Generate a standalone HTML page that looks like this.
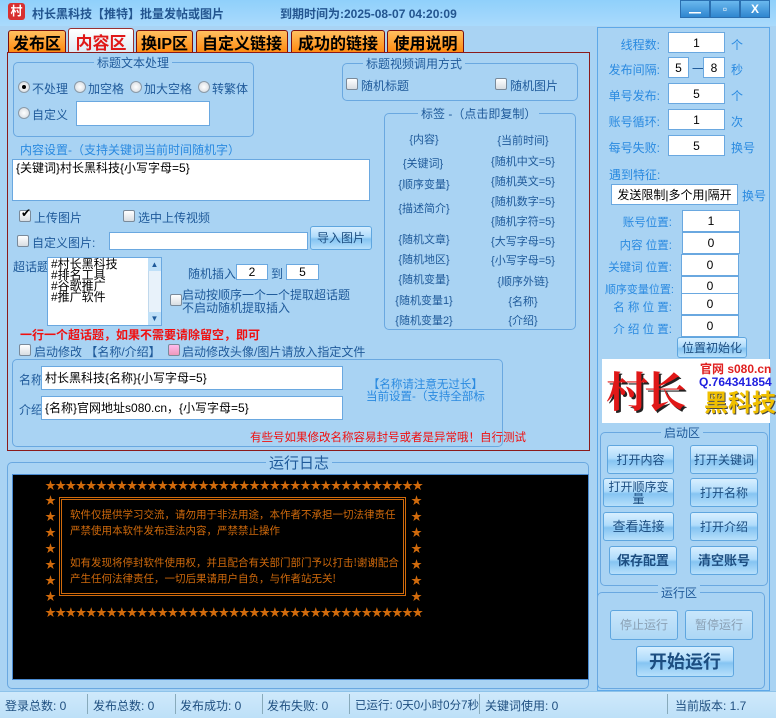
<!DOCTYPE html>
<html><head><meta charset="utf-8">
<style>
*{box-sizing:border-box;margin:0;padding:0}
body{width:776px;height:718px;overflow:hidden;background:#a9d3f3;font-family:"Liberation Sans","Noto Sans CJK SC",sans-serif;font-size:12px;color:#1f5a9a;position:relative}
.a{position:absolute;white-space:nowrap}
.inp{position:absolute;background:#fff;border:1px solid #6aa8e0;color:#000;font-size:12px;line-height:1;display:flex;align-items:center;justify-content:center}
.grp{position:absolute;border:1px solid #6aa8e0;border-radius:5px}
.gl{position:absolute;background:#a9d3f3;padding:0 3px;top:-9px;font-size:12px;color:#1f5a9a;white-space:nowrap}
.cb{position:absolute;width:12px;height:12px;border:1px solid #7a8a9a;border-radius:2px;background:linear-gradient(#fff,#d8dde2)}
.rd{position:absolute;width:12px;height:12px;border:1px solid #8a9aa8;border-radius:50%;background:radial-gradient(#fff,#d0d6dc)}
.tab{position:absolute;top:30px;height:22px;border:1px solid #7a1010;border-bottom:none;border-radius:3px 3px 0 0;background:linear-gradient(#ffc060,#ff8a10);color:#000;font-weight:bold;font-size:16px;display:flex;align-items:center;justify-content:center}
.btn{position:absolute;border:1px solid #5fa6df;border-radius:3px;background:linear-gradient(#d8efff 0%,#b0dcfb 45%,#85c4f2 55%,#b7e0fb 100%);color:#1c4d80;font-size:12px;display:flex;align-items:center;justify-content:center;text-align:center;line-height:12px}
.tg{position:absolute;font-size:11px;color:#1f5a9a;white-space:nowrap;transform:translateX(-50%)}
.rl{position:absolute;color:#2a8ae0;font-size:12px;text-align:right;white-space:nowrap}
.lg{position:absolute;color:#d06a0c;font-size:10.5px;white-space:nowrap;font-family:"Noto Sans CJK SC",sans-serif}
.sb{position:absolute;top:697px;font-size:12px;color:#1f4f80}
.sep{position:absolute;top:694px;width:1px;height:20px;background:#8ab}
</style></head><body>
<div class="a" style="left:0;top:0;width:776px;height:26px;background:linear-gradient(#8fd0fb,#a9dafc)"></div>
<div class="a" style="left:8px;top:3px;width:17px;height:17px;background:#d83030;border-radius:3px;color:#fff;font-size:12px;font-weight:bold;text-align:center;line-height:17px">村</div>
<div class="a" style="left:32px;top:5px;font-size:12px;font-weight:bold;color:#23558f">村长黑科技【推特】批量发帖或图片</div>
<div class="a" style="left:280px;top:5px;font-size:12px;font-weight:bold;color:#23558f">到期时间为:2025-08-07 04:20:09</div>
<div class="a" style="left:680px;top:0;width:30px;height:18px;background:linear-gradient(#6ab8ee,#2f86cf);border:1px solid #2a6fb0;color:#fff;text-align:center;font-weight:bold;line-height:14px">▁</div>
<div class="a" style="left:710px;top:0;width:30px;height:18px;background:linear-gradient(#6ab8ee,#2f86cf);border:1px solid #2a6fb0;color:#fff;text-align:center;font-weight:bold;line-height:16px">▫</div>
<div class="a" style="left:740px;top:0;width:30px;height:18px;background:linear-gradient(#6ab8ee,#2f86cf);border:1px solid #2a6fb0;color:#fff;text-align:center;font-weight:bold;line-height:16px">X</div>

<div class="tab" style="left:8px;width:58px">发布区</div>
<div class="tab" style="left:68px;width:66px;top:28px;height:25px;background:linear-gradient(#fff,#dde9f2);color:#e01818;font-size:17px;border-color:#9a3030">内容区</div>
<div class="tab" style="left:136px;width:57px">换IP区</div>
<div class="tab" style="left:196px;width:92px">自定义链接</div>
<div class="tab" style="left:291px;width:94px">成功的链接</div>
<div class="tab" style="left:387px;width:77px">使用说明</div>

<div class="a" style="left:7px;top:52px;width:583px;height:399px;border:1px solid #8b1a1a"></div>

<div class="grp" style="left:13px;top:62px;width:241px;height:75px"><span class="gl" style="left:80px">标题文本处理</span></div>
<div class="rd" style="left:18px;top:81px"></div><div class="a" style="left:22px;top:85px;width:4px;height:4px;background:#000;border-radius:50%"></div>
<div class="a" style="left:32px;top:80px">不处理</div>
<div class="rd" style="left:74px;top:81px"></div><div class="a" style="left:88px;top:80px">加空格</div>
<div class="rd" style="left:130px;top:81px"></div><div class="a" style="left:144px;top:80px">加大空格</div>
<div class="rd" style="left:198px;top:81px"></div><div class="a" style="left:212px;top:80px">转繁体</div>
<div class="rd" style="left:18px;top:107px"></div><div class="a" style="left:32px;top:106px">自定义</div>
<div class="inp" style="left:76px;top:101px;width:134px;height:25px"></div>

<div class="a" style="left:20px;top:141px;color:#2a8ae0">内容设置-（支持关键词当前时间随机字）</div>
<div class="inp" style="left:12px;top:159px;width:358px;height:42px;align-items:flex-start;justify-content:flex-start;padding:2px 3px">{关键词}村长黑科技{小写字母=5}</div>

<div class="cb" style="left:19px;top:210px"></div><div class="a" style="left:21px;top:206px;font-size:12px;color:#000">✔</div>
<div class="a" style="left:34px;top:209px">上传图片</div>
<div class="cb" style="left:123px;top:210px"></div><div class="a" style="left:138px;top:209px">选中上传视频</div>
<div class="cb" style="left:17px;top:235px"></div><div class="a" style="left:32px;top:234px">自定义图片:</div>
<div class="inp" style="left:109px;top:232px;width:199px;height:18px"></div>
<div class="btn" style="left:310px;top:226px;width:62px;height:24px">导入图片</div>

<div class="a" style="left:13px;top:258px">超话题</div>
<div class="inp" style="left:47px;top:257px;width:115px;height:69px;align-items:flex-start;justify-content:flex-start;padding:1px 3px;font-size:12px;line-height:11px;white-space:pre;font-family:'WenQuanYi Zen Hei',sans-serif">#村长黑科技
#排名工具
#谷歌推广
#推广软件</div>
<div class="a" style="left:148px;top:258px;width:13px;height:67px;background:#e8f2fa;border-left:1px solid #c0d8ec"></div>
<div class="a" style="left:148px;top:258px;width:13px;height:13px;background:#bfe0f8;font-size:8px;text-align:center;line-height:13px">▲</div>
<div class="a" style="left:148px;top:312px;width:13px;height:13px;background:#bfe0f8;font-size:8px;text-align:center;line-height:13px">▼</div>
<div class="a" style="left:188px;top:265px">随机插入</div>
<div class="inp" style="left:236px;top:264px;width:32px;height:16px">2</div>
<div class="a" style="left:271px;top:265px">到</div>
<div class="inp" style="left:286px;top:264px;width:33px;height:16px">5</div>
<div class="cb" style="left:170px;top:294px"></div>
<div class="a" style="left:182px;top:289px;line-height:13px">启动按顺序一个一个提取超话题<br>不启动随机提取插入</div>
<div class="a" style="left:20px;top:326px;font-weight:bold;color:#f01010">一行一个超话题，如果不需要请除留空，即可</div>
<div class="cb" style="left:19px;top:344px"></div><div class="a" style="left:34px;top:343px">启动修改 【名称/介绍】</div>
<div class="cb" style="left:168px;top:344px;background:linear-gradient(#fbe,#e9b)"></div><div class="a" style="left:182px;top:343px">启动修改头像/图片请放入指定文件</div>

<div class="grp" style="left:12px;top:359px;width:491px;height:88px"></div>
<div class="a" style="left:19px;top:371px">名称</div>
<div class="inp" style="left:41px;top:366px;width:302px;height:24px;justify-content:flex-start;padding-left:3px">村长黑科技{名称}{小写字母=5}</div>
<div class="a" style="left:19px;top:401px">介绍</div>
<div class="inp" style="left:41px;top:396px;width:302px;height:24px;justify-content:flex-start;padding-left:3px">{名称}官网地址s080.cn，{小写字母=5}</div>
<div class="a" style="left:366px;top:379px;font-size:11.5px;line-height:12px;color:#2a8ae0;text-align:center">【名称请注意无过长】<br>当前设置-（支持全部标</div>
<div class="a" style="left:250px;top:429px;font-size:11.5px;color:#f01010">有些号如果修改名称容易封号或者是异常哦！自行测试</div>

<div class="grp" style="left:342px;top:63px;width:236px;height:38px"><span class="gl" style="left:20px">标题视频调用方式</span></div>
<div class="cb" style="left:346px;top:78px"></div><div class="a" style="left:361px;top:77px">随机标题</div>
<div class="cb" style="left:495px;top:78px"></div><div class="a" style="left:510px;top:77px">随机图片</div>

<div class="grp" style="left:384px;top:113px;width:192px;height:217px"><span class="gl" style="left:33px">标签 -（点击即复制）</span></div>
<div class="tg" style="left:424px;top:131px">{内容}</div>
<div class="tg" style="left:423px;top:155px">{关键词}</div>
<div class="tg" style="left:424px;top:176px">{顺序变量}</div>
<div class="tg" style="left:424px;top:200px">{描述简介}</div>
<div class="tg" style="left:424px;top:231px">{随机文章}</div>
<div class="tg" style="left:424px;top:251px">{随机地区}</div>
<div class="tg" style="left:424px;top:271px">{随机变量}</div>
<div class="tg" style="left:424px;top:292px">{随机变量1}</div>
<div class="tg" style="left:424px;top:312px">{随机变量2}</div>
<div class="tg" style="left:523px;top:132px">{当前时间}</div>
<div class="tg" style="left:523px;top:153px">{随机中文=5}</div>
<div class="tg" style="left:523px;top:173px">{随机英文=5}</div>
<div class="tg" style="left:523px;top:193px">{随机数字=5}</div>
<div class="tg" style="left:523px;top:213px">{随机字符=5}</div>
<div class="tg" style="left:523px;top:233px">{大写字母=5}</div>
<div class="tg" style="left:523px;top:252px">{小写字母=5}</div>
<div class="tg" style="left:523px;top:273px">{顺序外链}</div>
<div class="tg" style="left:523px;top:293px">{名称}</div>
<div class="tg" style="left:523px;top:312px">{介绍}</div>

<div class="grp" style="left:7px;top:462px;width:582px;height:227px"><span class="gl" style="left:258px;top:-11px;font-size:15px">运行日志</span></div>
<div class="a" style="left:12px;top:474px;width:577px;height:206px;background:#000;border:1px solid #4a8ad0"></div>
<div class="lg" style="left:45px;top:477px;font-size:11px;letter-spacing:-0.8px">★★★★★★★★★★★★★★★★★★★★★★★★★★★★★★★★★★★★★</div>
<div class="lg" style="left:45px;top:604px;font-size:11px;letter-spacing:-0.8px">★★★★★★★★★★★★★★★★★★★★★★★★★★★★★★★★★★★★★</div>
<div class="lg" style="left:45px;top:492px;font-size:11px;line-height:16px">★<br>★<br>★<br>★<br>★<br>★<br>★</div>
<div class="lg" style="left:411px;top:492px;font-size:11px;line-height:16px">★<br>★<br>★<br>★<br>★<br>★<br>★</div>
<div class="a" style="left:59px;top:497px;width:347px;height:99px;border:3px double #d06a0c"></div>
<div class="lg" style="left:70px;top:507px;line-height:16px">软件仅提供学习交流，请勿用于非法用途，本作者不承担一切法律责任<br>严禁使用本软件发布违法内容，严禁禁止操作<br>&nbsp;<br>如有发现将停封软件使用权，并且配合有关部门部门予以打击!谢谢配合<br>产生任何法律责任，一切后果请用户自负，与作者站无关!</div>

<div class="a" style="left:597px;top:27px;width:173px;height:664px;border:1px solid #5ea8e8"></div>
<div class="rl" style="left:598px;width:62px;top:36px">线程数:</div>
<div class="inp" style="left:668px;top:32px;width:57px;height:21px">1</div><div class="rl" style="left:731px;top:36px">个</div>
<div class="rl" style="left:598px;width:62px;top:61px">发布间隔:</div>
<div class="inp" style="left:668px;top:57px;width:21px;height:21px">5</div><div class="a" style="left:692px;top:60px">一</div>
<div class="inp" style="left:703px;top:57px;width:22px;height:21px">8</div><div class="rl" style="left:731px;top:61px">秒</div>
<div class="rl" style="left:598px;width:62px;top:87px">单号发布:</div>
<div class="inp" style="left:668px;top:83px;width:57px;height:21px">5</div><div class="rl" style="left:731px;top:87px">个</div>
<div class="rl" style="left:598px;width:62px;top:113px">账号循环:</div>
<div class="inp" style="left:668px;top:109px;width:57px;height:21px">1</div><div class="rl" style="left:731px;top:113px">次</div>
<div class="rl" style="left:598px;width:62px;top:139px">每号失败:</div>
<div class="inp" style="left:668px;top:135px;width:57px;height:21px">5</div><div class="rl" style="left:731px;top:139px">换号</div>
<div class="rl" style="left:609px;top:166px">遇到特征:</div>
<div class="inp" style="left:611px;top:184px;width:127px;height:21px;font-size:12px">发送限制|多个用|隔开</div><div class="rl" style="left:742px;top:187px">换号</div>
<div class="rl" style="left:598px;width:74px;top:214px;font-size:11.5px">账号位置:</div>
<div class="inp" style="left:682px;top:210px;width:58px;height:22px">1</div>
<div class="rl" style="left:598px;width:74px;top:237px;font-size:11.5px">内容 位置:</div>
<div class="inp" style="left:682px;top:232px;width:58px;height:22px">0</div>
<div class="rl" style="left:598px;width:74px;top:259px;font-size:11.5px">关键词 位置:</div>
<div class="inp" style="left:681px;top:254px;width:58px;height:22px">0</div>
<div class="rl" style="left:596px;width:78px;top:281px;font-size:11px">顺序变量位置:</div>
<div class="inp" style="left:681px;top:276px;width:58px;height:19px">0</div>
<div class="rl" style="left:598px;width:74px;top:299px;font-size:11.5px">名 称 位 置:</div>
<div class="inp" style="left:681px;top:293px;width:58px;height:22px">0</div>
<div class="rl" style="left:598px;width:74px;top:321px;font-size:11.5px">介 绍 位 置:</div>
<div class="inp" style="left:681px;top:315px;width:58px;height:22px">0</div>
<div class="btn" style="left:677px;top:337px;width:70px;height:21px">位置初始化</div>
<div class="a" style="left:602px;top:359px;width:168px;height:64px;background:#fff"></div>
<div class="a" style="left:606px;top:362px;font-size:42px;line-height:56px;font-weight:bold;color:#e01818;letter-spacing:-4px;font-family:'Noto Serif CJK SC',serif;text-shadow:2px 2px 0 #222">村长</div>
<div class="a" style="left:700px;top:360px;font-size:12px;font-weight:bold;color:#e02020">官网 s080.cn</div>
<div class="a" style="left:699px;top:375px;font-size:12px;font-weight:bold;color:#2020e0">Q.764341854</div>
<div class="a" style="left:704px;top:390px;font-size:24px;font-weight:bold;color:#f0c000;text-shadow:1px 1px 0 #444;line-height:28px">黑科技</div>

<div class="grp" style="left:600px;top:432px;width:168px;height:154px"><span class="gl" style="left:60px">启动区</span></div>
<div class="btn" style="left:607px;top:445px;width:67px;height:29px">打开内容</div>
<div class="btn" style="left:690px;top:445px;width:68px;height:29px">打开关键词</div>
<div class="btn" style="left:603px;top:478px;width:71px;height:29px">打开顺序变<br>量</div>
<div class="btn" style="left:690px;top:478px;width:68px;height:29px">打开名称</div>
<div class="btn" style="left:603px;top:512px;width:71px;height:29px;font-size:13px">查看连接</div>
<div class="btn" style="left:690px;top:512px;width:68px;height:29px">打开介绍</div>
<div class="btn" style="left:609px;top:546px;width:68px;height:29px;font-size:13px;font-weight:bold">保存配置</div>
<div class="btn" style="left:690px;top:546px;width:68px;height:29px;font-size:13px;font-weight:bold">清空账号</div>
<div class="grp" style="left:597px;top:592px;width:168px;height:97px"><span class="gl" style="left:60px">运行区</span></div>
<div class="btn" style="left:610px;top:610px;width:68px;height:30px;color:#8aa0b4;background:linear-gradient(#c9e6fb,#add7f5)">停止运行</div>
<div class="btn" style="left:685px;top:610px;width:68px;height:30px;color:#8aa0b4;background:linear-gradient(#c9e6fb,#add7f5)">暂停运行</div>
<div class="btn" style="left:636px;top:646px;width:98px;height:31px;font-size:18px;font-weight:bold">开始运行</div>

<div class="a" style="left:0;top:691px;width:776px;height:27px;background:linear-gradient(#cfe9fb,#bde0f8);border-top:1px solid #8ec3ea"></div>
<div class="sb" style="left:5px">登录总数: 0</div><div class="sep" style="left:87px"></div>
<div class="sb" style="left:93px">发布总数: 0</div><div class="sep" style="left:175px"></div>
<div class="sb" style="left:180px">发布成功: 0</div><div class="sep" style="left:262px"></div>
<div class="sb" style="left:267px">发布失败: 0</div><div class="sep" style="left:349px"></div>
<div class="sb" style="left:355px;font-size:11.5px">已运行: 0天0小时0分7秒</div><div class="sep" style="left:479px"></div>
<div class="sb" style="left:485px">关键词使用: 0</div><div class="sep" style="left:667px"></div>
<div class="sb" style="left:675px">当前版本: 1.7</div>
</body></html>
